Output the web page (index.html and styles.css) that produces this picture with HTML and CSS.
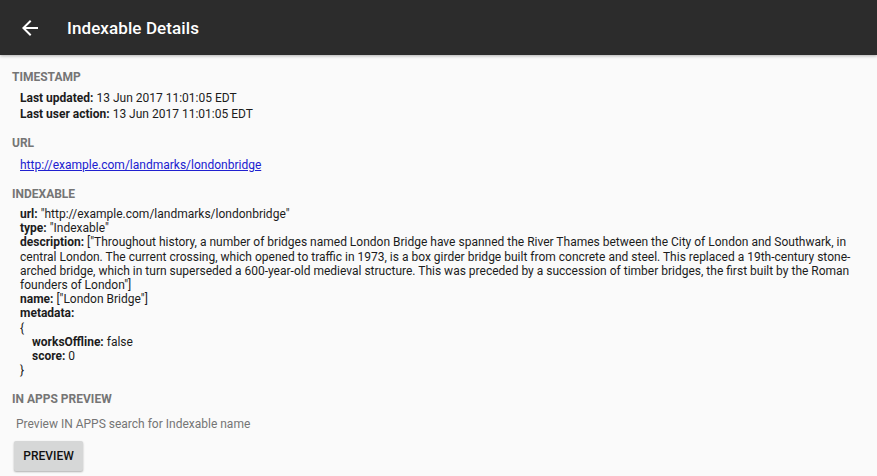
FILE: index.html
```html
<!DOCTYPE html>
<html>
<head>
<meta charset="utf-8">
<link rel="stylesheet" href="styles.css">
</head>
<body>
<header class="appbar">
  <svg class="back" width="24" height="24" viewBox="0 0 24 24"><path d="M20 11H7.83l5.59-5.59L12 4l-8 8 8 8 1.41-1.41L7.83 13H20v-2z" fill="#fff"/></svg>
  <h1 class="title">Indexable Details</h1>
</header>
<main class="content">
  <section class="sec">
    <h2 class="sec-title">TIMESTAMP</h2>
    <div class="rows rows-ts">
      <div><b>Last updated:</b> 13 Jun 2017 11:01:05 EDT</div>
      <div><b>Last user action:</b> 13 Jun 2017 11:01:05 EDT</div>
    </div>
  </section>
  <section class="sec">
    <h2 class="sec-title">URL</h2>
    <div class="rows rows-url"><a class="link" href="#">http://example.com/landmarks/londonbridge</a></div>
  </section>
  <section class="sec sec-idx">
    <h2 class="sec-title">INDEXABLE</h2>
    <div class="rows rows-idx">
      <div><b>url:</b> "http://example.com/landmarks/londonbridge"</div>
      <div><b>type:</b> "Indexable"</div>
      <div><b>description:</b> ["Throughout history, a number of bridges named London Bridge have spanned the River Thames between the City of London and Southwark, in central London. The current crossing, which opened to traffic in 1973, is a box girder bridge built from concrete and steel. This replaced a 19th-century stone-arched bridge, which in turn superseded a 600-year-old medieval structure. This was preceded by a succession of timber bridges, the first built by the Roman founders of London"]</div>
      <div><b>name:</b> ["London Bridge"]</div>
      <div><b>metadata:</b></div>
      <div>{</div>
      <div class="nested"><b>worksOffline:</b> false</div>
      <div class="nested"><b>score:</b> 0</div>
      <div>}</div>
    </div>
  </section>
  <section class="sec">
    <h2 class="sec-title">IN APPS PREVIEW</h2>
    <p class="hint">Preview IN APPS search for Indexable name</p>
    <button class="btn">PREVIEW</button>
  </section>
</main>
</body>
</html>
```
FILE: styles.css
```css
html, body { margin: 0; padding: 0; }
body {
  background: #fafafa;
  font-family: Roboto, "Noto Sans", sans-serif;
  color: #1c1c1c;
  width: 877px;
  height: 476px;
  overflow: hidden;
}
.appbar {
  height: 55px;
  background: #2c2c2c;
  display: flex;
  align-items: center;
  padding-left: 18px;
  gap: 25px;
  box-shadow: 0 1px 3px rgba(0,0,0,0.3);
  position: relative;
}
.back { display: block; }
.title {
  margin: 0;
  color: #fff;
  font-size: 17px;
  font-weight: 500;
  letter-spacing: 0.1px;
}
.content { padding: 14px 12px 0 12px; }
.sec { margin-bottom: 13px; }
.sec-idx { margin-bottom: 14px; }
.sec-title {
  margin: 0;
  font-size: 12px;
  font-weight: 700;
  color: #757575;
  line-height: 16px;
}
.rows { padding-left: 8px; font-size: 12px; }
.rows b { font-weight: 700; }
.rows-ts { margin-top: 5px; line-height: 16px; }
.rows-url { margin-top: 6px; line-height: 16px; }
.rows-idx { margin-top: 5px; line-height: 14.2px; margin-right: 12px; }
.nested { padding-left: 12px; }
.link { color: #2020d0; text-decoration: underline; }
.hint {
  margin: 9px 0 0 4px;
  font-size: 12px;
  line-height: 16px;
  color: #757575;
}
.btn {
  margin: 9px 0 0 2px;
  width: 69px;
  height: 30px;
  border: none;
  border-radius: 2px;
  background: #d6d7d7;
  box-shadow: 0 1px 2px rgba(0,0,0,0.3);
  font-family: Roboto, sans-serif;
  font-weight: 500;
  font-size: 12px;
  color: #111;
  padding: 0;
}
```
